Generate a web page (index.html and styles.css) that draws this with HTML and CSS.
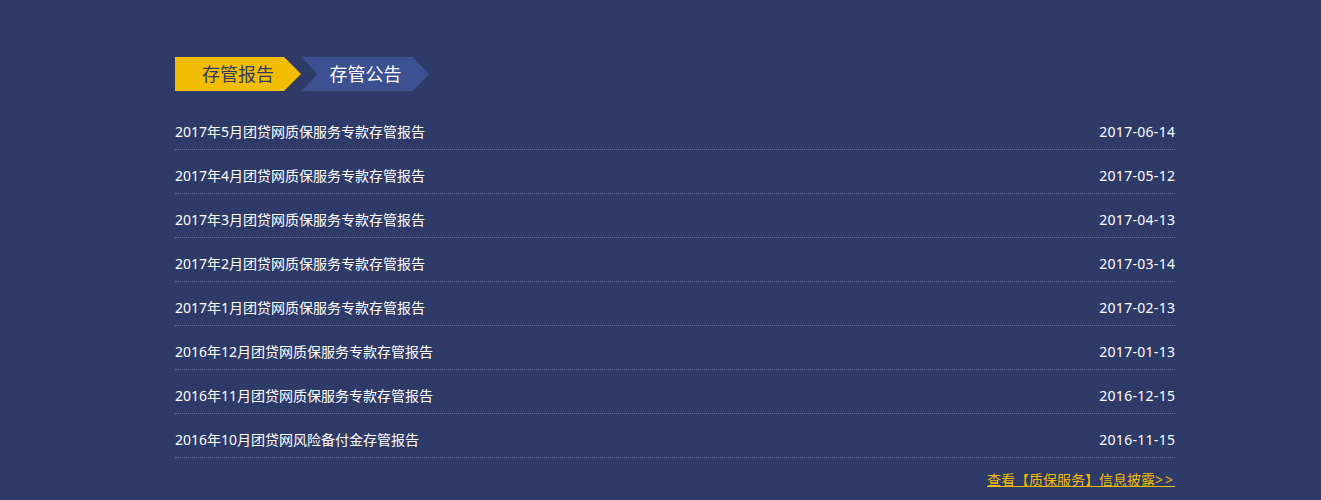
FILE: index.html
```html
<!DOCTYPE html>
<html lang="zh-CN">
<head>
<meta charset="utf-8">
<title>存管报告</title>
<link rel="stylesheet" href="styles.css">
</head>
<body>
<div class="page">
  <div class="wrap">
    <div class="tabs">
      <div class="tab tab-active">存管报告</div>
      <div class="tab tab-next">存管公告</div>
    </div>
    <ul class="list">
      <li class="row"><span class="title">2017年5月团贷网质保服务专款存管报告</span><span class="date">2017-06-14</span></li>
      <li class="row"><span class="title">2017年4月团贷网质保服务专款存管报告</span><span class="date">2017-05-12</span></li>
      <li class="row"><span class="title">2017年3月团贷网质保服务专款存管报告</span><span class="date">2017-04-13</span></li>
      <li class="row"><span class="title">2017年2月团贷网质保服务专款存管报告</span><span class="date">2017-03-14</span></li>
      <li class="row"><span class="title">2017年1月团贷网质保服务专款存管报告</span><span class="date">2017-02-13</span></li>
      <li class="row"><span class="title">2016年12月团贷网质保服务专款存管报告</span><span class="date">2017-01-13</span></li>
      <li class="row"><span class="title">2016年11月团贷网质保服务专款存管报告</span><span class="date">2016-12-15</span></li>
      <li class="row"><span class="title">2016年10月团贷网风险备付金存管报告</span><span class="date">2016-11-15</span></li>
    </ul>
    <div class="more"><a href="#" class="more-link">查看【质保服务】信息披露<span class="arrows">&gt;&gt;</span></a></div>
  </div>
</div>
</body>
</html>
```

FILE: styles.css
```css
html, body {
  margin: 0;
  padding: 0;
  background: #2e3a67;
}
.page {
  height: 500px;
  overflow: hidden;
  font-family: "Noto Sans", "Noto Sans CJK SC", sans-serif;
  color: #fff;
}
.wrap {
  width: 1000px;
  margin-left: 175px;
  padding-top: 57px;
}
.tabs {
  display: flex;
  gap: 1px;
  height: 34px;
}
.tab {
  height: 34px;
  line-height: 34px;
  font-size: 18px;
  text-align: center;
}
.tab-active {
  width: 126px;
  background: #f2bd00;
  color: #2e3a67;
  clip-path: polygon(0 0, calc(100% - 17px) 0, 100% 50%, calc(100% - 17px) 100%, 0 100%);
}
.tab-next {
  width: 127px;
  background: #3c5092;
  color: #fff;
  clip-path: polygon(0 0, calc(100% - 16px) 0, 100% 50%, calc(100% - 16px) 100%, 0 100%, 15px 50%);
}
.list {
  list-style: none;
  margin: 15px 0 0 0;
  padding: 0;
}
.row {
  display: flex;
  justify-content: space-between;
  padding: 16px 0 7px;
  line-height: 20px;
  font-size: 14px;
  border-bottom: 1px dotted #6a7299;
}
.date {
  letter-spacing: 0.3px;
  margin-right: -0.3px;
}
.more {
  display: flex;
  justify-content: flex-end;
  padding-top: 12px;
  line-height: 20px;
  font-size: 14px;
}
.more-link {
  color: #f2bd00;
  text-decoration: underline;
}
.arrows {
  letter-spacing: 2px;
  margin-right: -2px;
  padding-right: 2px;
}
```
